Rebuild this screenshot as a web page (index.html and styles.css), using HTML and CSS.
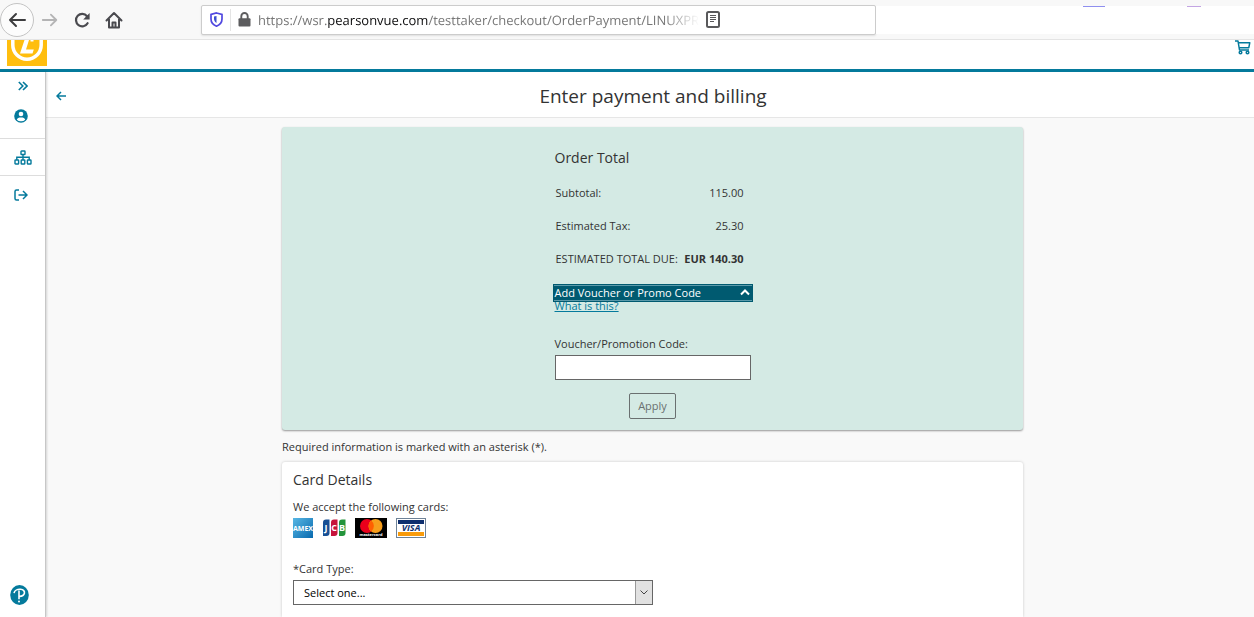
FILE: index.html
```html
<!DOCTYPE html>
<html lang="en">
<head>
    <meta charset="UTF-8">
    <meta name="viewport" content="width=device-width, initial-scale=1.0">
    <link rel="stylesheet" href="styles.css">
    <title>Enter payment and billing</title>
</head>
<body>
    <!-- Browser toolbar -->
    <div class="toolbar">
        <button class="nav-btn nav-back" aria-label="Back">
            <svg width="20" height="20" viewBox="0 0 20 20" fill="none" stroke="#3d3d3f" stroke-width="2" stroke-linecap="round" stroke-linejoin="round"><path d="M18 10H3M9 4L3 10l6 6"/></svg>
        </button>
        <button class="nav-btn" aria-label="Forward">
            <svg width="18" height="18" viewBox="0 0 20 20" fill="none" stroke="#b4b4b5" stroke-width="2" stroke-linecap="round" stroke-linejoin="round"><path d="M2 10h15M11 4l6 6-6 6"/></svg>
        </button>
        <button class="nav-btn" aria-label="Reload">
            <svg width="18" height="18" viewBox="0 0 18 18"><path d="M14.6 12.2A6.2 6.2 0 1 1 14 5.2" fill="none" stroke="#4a4a4f" stroke-width="2.2" stroke-linecap="round"/><path d="M16.6 2v6.4h-6.4z" fill="#4a4a4f"/></svg>
        </button>
        <button class="nav-btn" aria-label="Home">
            <svg width="18" height="18" viewBox="0 0 18 18" fill="none" stroke="#4a4a4f" stroke-width="2" stroke-linecap="round" stroke-linejoin="round"><path d="M1.5 9.5L9 2l7.500 7.500M4 8v8.500h10V8"/><path d="M7.500 16v-4.500h3V16"/></svg>
        </button>
        <div class="url-bar">
            <svg width="13" height="15" viewBox="0 0 13 15"><path d="M6.500 1L12 2.500v4.500c0 3.500-2.500 6-5.500 7.200C3.500 13 1 10.500 1 7V2.500z" fill="none" stroke="#5148e0" stroke-width="1.700"/><path d="M6.500 4v7C5 10 4 8.500 4 7V4.600z" fill="#3b4fd0"/></svg>
            <span class="url-sep"></span>
            <svg width="13" height="15" viewBox="0 0 13 15"><path d="M3.300 7V4.200a3.200 3.200 0 0 1 6.400 0V7" fill="none" stroke="#5c5c5e" stroke-width="1.900"/><rect x=".5" y="6.200" width="12" height="8.300" rx="1" fill="#5c5c5e"/></svg>
            <span class="url-text">https://wsr.<b>pearsonvue.com</b>/testtaker/checkout/OrderPayment/LINUXPR</span>
            <svg width="14" height="17" viewBox="0 0 14 17" fill="none" stroke="#59595b"><rect x="1" y="1" width="12" height="15" rx="1.500" stroke-width="2"/><path d="M4 4.500h6M4 6.500h6M4 8.500h6M4 10.500h4"/></svg>
        </div>
        <div class="toolbar-blank">
            <span class="tab-mark"></span>
            <span class="tab-mark tab-mark-light"></span>
        </div>
    </div>

    <header class="site-header">
        <svg class="logo" width="40" height="26" viewBox="0 0 40 26">
            <rect width="40" height="26" fill="#ffbe0f"/>
            <path d="M5.800 0V5a14 14 0 0 0 28.400 0V0" fill="none" stroke="#fff" stroke-width="3.500"/>
            <path d="M17.500 0h4.500l-3 9.500h7.800l-1.300 4H13z" fill="#fff"/>
            <path d="M23.500 0h3v1.500h-3z" fill="#fff"/>
        </svg>
        <a href="#" class="cart" aria-label="Cart">
            <svg width="16" height="15" viewBox="0 0 16 15" fill="none" stroke="#047a9c" stroke-width="1.500" stroke-linejoin="round"><path d="M0 1h3l1.500 9H14M3.300 2.700h11.500l-1 5H4.200"/><circle cx="5.500" cy="12.500" r="1.300"/><circle cx="12.500" cy="12.500" r="1.300"/></svg>
        </a>
    </header>

    <div class="layout">
        <nav class="sidebar">
            <a href="#" class="side-link side-toggle" aria-label="Expand menu">
                <svg width="10" height="10" viewBox="0 0 10 10" fill="none" stroke="#047a9c" stroke-width="1.600"><path d="M.8 1l4 4-4 4M5 1l4 4-4 4"/></svg>
            </a>
            <a href="#" class="side-link side-user" aria-label="Profile">
                <svg width="14" height="14" viewBox="0 0 14 14"><circle cx="7" cy="7" r="6.800" fill="#047a9c"/><circle cx="7" cy="5" r="2.300" fill="#fff"/><path d="M2.800 10.800C3.300 9 4.500 8.500 7 8.500s3.700.5 4.200 2.300A6 6 0 0 1 7 12.300a6 6 0 0 1-4.200-1.500z" fill="#fff"/></svg>
            </a>
            <a href="#" class="side-link side-org" aria-label="Programs">
                <svg width="18" height="15" viewBox="0 0 18 15" fill="none" stroke="#047a9c" stroke-width="1.400"><rect x="7" y="1" width="4" height="3.500" rx=".6"/><rect x="1" y="10" width="3.600" height="4" rx=".6"/><rect x="7.200" y="10" width="3.600" height="4" rx=".6"/><rect x="13.400" y="10" width="3.600" height="4" rx=".6"/><path d="M9 4.500V10M2.800 10V7.200h12.400V10"/></svg>
            </a>
            <a href="#" class="side-link side-out" aria-label="Sign out">
                <svg width="14" height="12" viewBox="0 0 14 12" fill="none" stroke="#047a9c" stroke-width="1.500"><path d="M5 1H2.500Q1 1 1 2.500v7Q1 11 2.500 11H5M4.500 6H13M9 2l4 4-4 4"/></svg>
            </a>
            <a href="#" class="side-brand" aria-label="Pearson">
                <svg width="19" height="20" viewBox="0 0 19 20"><ellipse cx="9.500" cy="10" rx="9.300" ry="9.900" fill="#047a9c"/><path d="M4 8.200C4.500 5.500 7.500 4 10.500 4.300c3 .3 4.300 2 3.900 4-.5 2-2.600 3.100-4.800 3.100M9 5.500v8.800" fill="none" stroke="#fff" stroke-width="1.600"/><circle cx="9" cy="16.600" r="1" fill="#fff"/></svg>
            </a>
        </nav>

        <main class="main">
            <div class="title-bar">
                <a href="#" class="back-link" aria-label="Go back">
                    <svg width="10" height="10" viewBox="0 0 10 10" fill="none" stroke="#047a9c" stroke-width="1.500"><path d="M10 5H1M5 1L1 5l4 4"/></svg>
                </a>
                <h1>Enter payment and billing</h1>
            </div>

            <div class="content">
                <section class="order">
                    <div class="order-inner">
                        <h2>Order Total</h2>
                        <table class="totals">
                            <tr>
                                <th scope="row">Subtotal:</th>
                                <td>115.00</td>
                            </tr>
                            <tr>
                                <th scope="row">Estimated Tax:</th>
                                <td>25.30</td>
                            </tr>
                            <tr class="due">
                                <th scope="row">ESTIMATED TOTAL DUE:</th>
                                <td>EUR 140.30</td>
                            </tr>
                        </table>
                        <button class="voucher-toggle">
                            <span>Add Voucher or Promo Code</span>
                            <svg width="10" height="8" viewBox="0 0 10 8" fill="none" stroke="#fff" stroke-width="2"><path d="M1 5.500l4-4 4 4"/></svg>
                        </button>
                        <a href="#" class="help-link">What is this?</a>
                        <label for="voucher">Voucher/Promotion Code:</label>
                        <input type="text" id="voucher" class="voucher-input">
                        <button class="apply-btn">Apply</button>
                    </div>
                </section>

                <p class="required-note">Required information is marked with an asterisk (*).</p>

                <section class="card-details">
                    <h2>Card Details</h2>
                    <p>We accept the following cards:</p>
                    <div class="card-logos">
                        <svg width="20" height="20" viewBox="0 0 20 20">
                            <defs><linearGradient id="amex" x2="1" y2="1"><stop offset="0" stop-color="#58b7e4"/><stop offset="1" stop-color="#0869ae"/></linearGradient></defs>
                            <rect width="20" height="20" fill="url(#amex)"/>
                            <text x="10" y="13" class="amex-text">AMEX</text>
                        </svg>
                        <svg width="24" height="20" viewBox="0 0 24 20">
                            <path d="M4 1.500h3.500V15q0 3-3 3H1V4.500q0-3 3-3z" fill="#174f94"/>
                            <path d="M12 1.500h3.500V15q0 3-3 3H9V4.500q0-3 3-3z" fill="#c5143b"/>
                            <path d="M20 1.500h3.500V15q0 3-3 3H17V4.500q0-3 3-3z" fill="#23943b"/>
                            <text x="4 12 20" y="13" class="jcb-text">JCB</text>
                        </svg>
                        <svg width="32" height="20" viewBox="0 0 32 20">
                            <rect width="32" height="20" fill="#000"/>
                            <circle cx="12" cy="8" r="7" fill="#eb001b"/>
                            <circle cx="20.500" cy="8" r="7" fill="#f79e1b"/>
                            <path d="M16.200 2.500a7 7 0 0 1 0 11 7 7 0 0 1 0-11z" fill="#ff5f00"/>
                            <text x="16" y="18" class="mc-text">mastercard</text>
                        </svg>
                        <svg width="30" height="20" viewBox="0 0 30 20">
                            <rect x=".5" y=".5" width="29" height="19" fill="#fff" stroke="#6e8297"/>
                            <rect x="2" y="2" width="26" height="4" fill="#0e2f6e"/>
                            <rect x="2" y="14" width="26" height="4" fill="#f89b0c"/>
                            <text x="15" y="13" class="visa-text">VISA</text>
                        </svg>
                    </div>
                    <label for="cardType">*Card Type:</label>
                    <div class="select-wrap">
                        <select id="cardType">
                            <option>Select one...</option>
                            <option>American Express</option>
                            <option>JCB</option>
                            <option>MasterCard</option>
                            <option>Visa</option>
                        </select>
                        <span class="select-arrow">
                            <svg width="8" height="5" viewBox="0 0 8 5" fill="none" stroke="#444"><path d="M.5.5L4 4 7.500.5"/></svg>
                        </span>
                    </div>
                </section>
            </div>
        </main>
    </div>
</body>
</html>
```
FILE: styles.css
```css
* {
    box-sizing: border-box;
}

body {
    margin: 0;
    height: 100vh;
    display: flex;
    flex-direction: column;
    overflow: hidden;
    font-family: "Open Sans", "Noto Sans", sans-serif;
    font-size: 11px;
    line-height: 16px;
    color: #333;
    background-color: #fff;
}

button,
input,
select {
    font: inherit;
    color: inherit;
}

svg {
    display: block;
    flex-shrink: 0;
}

h1,
h2,
p {
    margin: 0;
    font-weight: normal;
}

/* browser toolbar */
.toolbar {
    display: flex;
    align-items: center;
    height: 40px;
    flex-shrink: 0;
    background-color: #f8f8f8;
    border-bottom: 1px solid #e4e4e4;
}

.nav-btn {
    display: flex;
    align-items: center;
    justify-content: center;
    width: 32px;
    height: 32px;
    padding: 0;
    border: none;
    background: none;
}

.nav-back {
    width: 34px;
    height: 34px;
    border: 1px solid #c4c4c4;
    border-radius: 50%;
    background-color: #fcfcfc;
}

.url-bar {
    display: flex;
    align-items: center;
    flex: 0 1 675px;
    min-width: 0;
    height: 30px;
    margin-left: 71px;
    padding-left: 8px;
    background-color: #fff;
    border: 1px solid #ccc;
    border-radius: 2px;
    box-shadow: 0 1px 2px rgba(0, 0, 0, 0.1);
}

.url-sep {
    width: 1px;
    height: 22px;
    margin: 0 7px;
    background-color: #e4e4e4;
}

.url-text {
    width: 441px;
    margin: 0 7px;
    overflow: hidden;
    white-space: nowrap;
    font-size: 13px;
    line-height: 20px;
    color: #777;
    text-rendering: geometricPrecision;
    -webkit-mask-image: linear-gradient(to right, #000 92%, transparent);
    mask-image: linear-gradient(to right, #000 92%, transparent);
}

.url-text b {
    font-weight: normal;
    color: #0c0c0d;
}

.toolbar-blank {
    display: flex;
    justify-content: flex-end;
    gap: 82px;
    flex: 1;
    height: 28px;
    padding-right: 53px;
    background-color: #fff;
}

.tab-mark {
    width: 22px;
    height: 1px;
    background-color: #8f8fef;
}

.tab-mark-light {
    width: 14px;
    background-color: #c3a5e3;
}

/* site header */
.site-header {
    display: flex;
    align-items: flex-start;
    justify-content: space-between;
    height: 32px;
    flex-shrink: 0;
    padding: 0 3px 0 7px;
    border-bottom: 3px solid #047a9c;
}

.layout {
    display: flex;
    flex: 1;
    min-height: 0;
}

/* left menu */
.sidebar {
    display: flex;
    flex-direction: column;
    width: 46px;
    flex-shrink: 0;
    background-color: #fff;
    border-right: 1px solid #c7c7c7;
    box-shadow: 1px 0 2px rgba(0, 0, 0, 0.15);
    z-index: 1;
}

.side-link {
    display: flex;
    align-items: center;
    padding-left: 14px;
}

.side-toggle {
    height: 28px;
    padding-left: 18px;
}

.side-user {
    height: 39px;
    padding-bottom: 7px;
    border-bottom: 1px solid #ddd;
}

.side-org {
    height: 37px;
    border-bottom: 1px solid #ddd;
}

.side-out {
    height: 38px;
}

.side-brand {
    margin-top: auto;
    padding: 0 0 12px 10px;
}

/* page */
.main {
    display: flex;
    flex-direction: column;
    flex: 1;
    min-width: 0;
    background-color: #f9f9f9;
}

.title-bar {
    display: flex;
    align-items: center;
    height: 46px;
    flex-shrink: 0;
    padding: 2px 0 0 10px;
    background-color: #fff;
    border-bottom: 1px solid #e6e6e6;
}

h1 {
    flex: 1;
    padding-right: 14px;
    text-align: center;
    font-size: 19px;
    line-height: 28px;
}

h2 {
    font-size: 14px;
    line-height: 20px;
}

.content {
    display: flex;
    flex-direction: column;
    flex: 1;
    min-height: 0;
    width: 62%;
    max-width: 746px;
    margin: 0 auto;
    padding: 9px 0 0 5px;
}

.order {
    padding: 21px 0 11px;
    background-color: #d4eae4;
    border-radius: 3px;
    box-shadow: 0 1px 2px rgba(0, 0, 0, 0.4);
}

.order-inner {
    display: flex;
    flex-direction: column;
    width: 200px;
    margin: 0 auto;
}

.order-inner h2,
.order-inner label,
.help-link {
    margin-left: 2px;
}

.totals {
    margin: 8px 9px 9px 3px;
    border-collapse: collapse;
}

.totals th,
.totals td {
    height: 33px;
    padding: 0;
    text-align: left;
    font-weight: normal;
    white-space: nowrap;
}

.totals td {
    text-align: right;
}

.totals .due td {
    font-weight: bold;
}

.voucher-toggle {
    display: flex;
    align-items: center;
    justify-content: space-between;
    height: 18px;
    padding: 0 2px 0 1px;
    color: #fff;
    background-color: #005a70;
    border: 1px solid #005a70;
    box-shadow: inset 0 1px #5b9aaa, inset 0 -1px #5b9aaa;
}

.help-link {
    align-self: flex-start;
    line-height: 8px;
    color: #047a9c;
}

.order-inner label {
    margin-top: 26px;
}

.voucher-input {
    height: 25px;
    margin: 3px 2px 13px;
    padding: 0 8px;
    background-color: #fff;
    border: 1px solid #666;
}

.apply-btn {
    align-self: center;
    height: 26px;
    padding: 0 8px;
    color: #6a7070;
    background: none;
    border: 1px solid #6a7070;
    border-radius: 2px;
}

.required-note {
    margin: 9px 0 7px;
}

.card-details {
    flex: 1;
    padding: 8px 11px;
    background-color: #fff;
    border-radius: 3px 3px 0 0;
    box-shadow: 0 0 3px rgba(0, 0, 0, 0.2);
}

.card-details p {
    margin: 9px 0 3px;
}

.card-logos {
    display: flex;
    gap: 9px;
    margin-bottom: 23px;
}

.card-logos text {
    font-family: "Open Sans", sans-serif;
    font-weight: bold;
    text-anchor: middle;
    fill: #fff;
}

.card-logos .amex-text {
    font-size: 7px;
}

.card-logos .jcb-text {
    font-size: 9px;
}

.card-logos .mc-text {
    font-size: 4px;
}

.card-logos .visa-text {
    font-size: 9px;
    font-style: italic;
    fill: #0e2f6e;
}

.card-details label {
    display: block;
    margin-bottom: 3px;
}

.select-wrap {
    position: relative;
    max-width: 360px;
}

.select-wrap select {
    display: block;
    width: 100%;
    height: 25px;
    padding: 0 24px 0 10px;
    color: #000;
    background-color: #fff;
    border: 1px solid #666;
    border-radius: 0;
    appearance: none;
}

.select-arrow {
    position: absolute;
    top: 1px;
    right: 1px;
    bottom: 1px;
    display: flex;
    align-items: center;
    justify-content: center;
    width: 17px;
    background-color: #e1e1e1;
    border-left: 1px solid #999;
    pointer-events: none;
}
```
